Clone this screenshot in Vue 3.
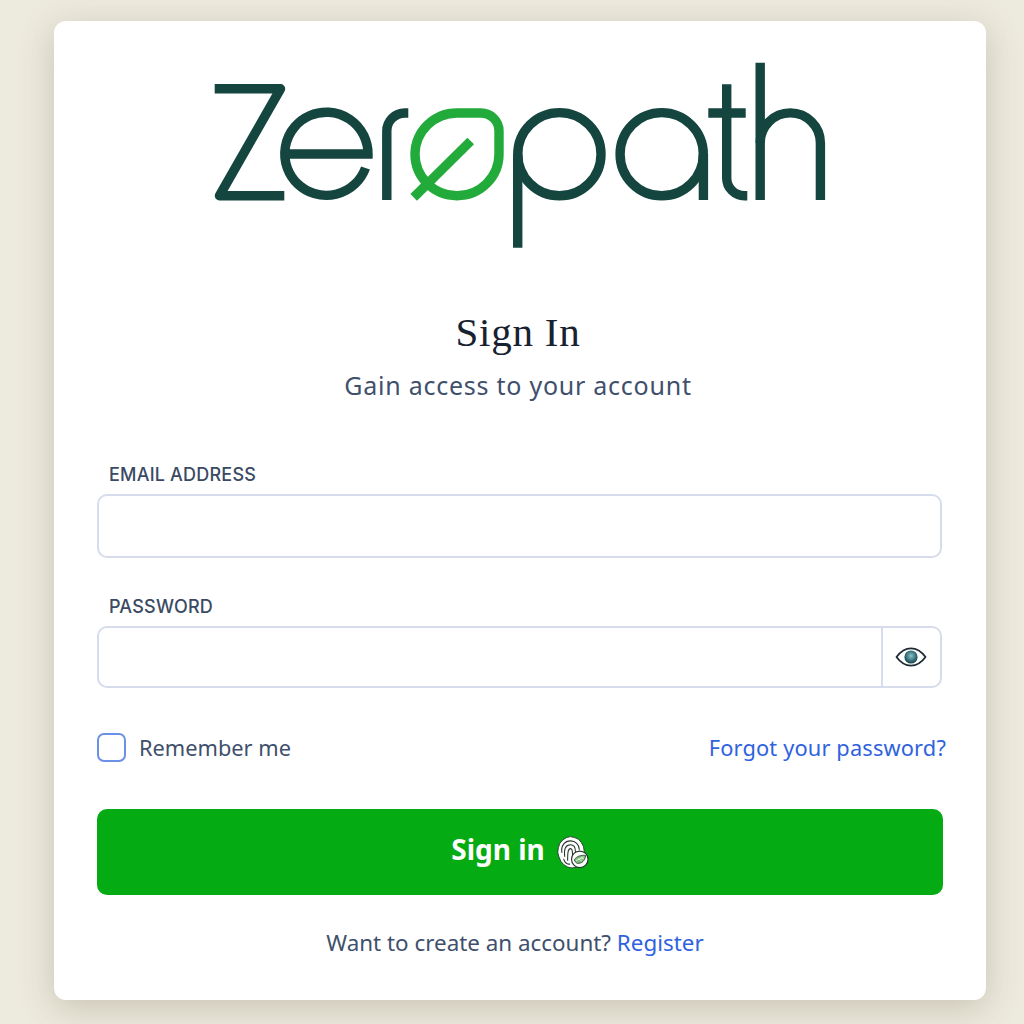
<script setup>
import { ref } from 'vue'

const email = ref('')
const password = ref('')
const remember = ref(false)
</script>

<template>
  <main class="page">
    <section class="card">
      <svg class="logo" viewBox="205 55 630 200" width="630" height="200" role="img" aria-label="Zeropath">
        <g class="ink">
          <path stroke-linejoin="round" d="M214.7 88.8H280.5L219.5 195.7H284.3" />
          <path d="M284.8 154H368A41.6 41.6 0 1 0 365.5 168" />
          <path d="M386.8 200V131A18 18 0 0 1 404.8 113H408.3" />
          <circle cx="559.4" cy="154.2" r="41.6" />
          <path d="M517.7 154V247.7" />
          <circle cx="661.7" cy="154.2" r="41.6" />
          <path d="M703.4 154V200" />
          <path d="M726.7 84.3V178A17.7 17.7 0 0 0 744.4 195.7H747.3" />
          <path d="M708.3 113H745.7" />
          <path d="M760.2 62.7V200" />
          <path d="M820.4 200V143A30.1 30.1 0 0 0 760.2 143" />
        </g>
        <g class="leaf">
          <path d="M457 113H481A18 18 0 0 1 499 131V154A42 41.7 0 0 1 457 195.7A42 41.7 0 0 1 415 154A42 41.7 0 0 1 457 113Z" />
          <path d="M413.7 197.3L470.7 141" />
        </g>
      </svg>

      <h1 class="title">Sign In</h1>
      <p class="subtitle">Gain access to your account</p>

      <form class="form" @submit.prevent>
        <label class="label" for="email">EMAIL ADDRESS</label>
        <input id="email" v-model="email" class="input email" type="email" />

        <label class="label password-label" for="password">PASSWORD</label>
        <div class="password-group">
          <input id="password" v-model="password" class="input password" type="password" />
          <button class="eye" type="button" aria-label="Show password">
            <svg viewBox="0 0 32 20" width="32" height="20">
              <defs>
                <radialGradient id="pupil" cx="50%" cy="42%" r="58%">
                  <stop offset="0%" stop-color="#8fc0c6" />
                  <stop offset="55%" stop-color="#3f7c88" />
                  <stop offset="100%" stop-color="#173f49" />
                </radialGradient>
              </defs>
              <path d="M1.5 10C6 3.8 10.6 1.3 16 1.3S26 3.8 30.5 10C26 16.2 21.4 18.7 16 18.7S6 16.2 1.5 10Z" fill="none" stroke="#1d2b33" stroke-width="1.8" stroke-linejoin="round" />
              <circle cx="16" cy="10" r="6.6" fill="url(#pupil)" />
            </svg>
          </button>
        </div>

        <div class="options">
          <label class="remember">
            <input v-model="remember" class="check" type="checkbox" />
            <span>Remember me</span>
          </label>
          <a class="link forgot" href="#">Forgot your password?</a>
        </div>

        <button class="submit" type="submit">
          <span class="submit-text">Sign in</span>
          <svg viewBox="0 0 34 36" width="33" height="35" aria-hidden="true">
            <path d="M11 2.5L15 1.6L19 2.6L23 4.2L26 7.6L28.2 11.5L29 16L28.7 21L27.5 26L25 30L21 33L16.5 34L12 33L8 30.5L5 27L3 22.5L1.8 18L2.4 13L4 8.5L7 5Z" fill="#fff" stroke="#26352b" stroke-width="0.9" stroke-linejoin="round" />
            <g fill="none" stroke="#26352b" stroke-width="1.1" stroke-linecap="round">
              <path d="M6 18C5 11 9 6 15 6C20 6 24 10 24 15" />
              <path d="M9 22C8 14 10 10 15 10C19 10 20 13 20 17" />
              <path d="M12 26C12 20 12 14 15 14C17 14 17 17 17 20" />
              <path d="M8 25C9 28 11 30 14 30" />
            </g>
            <circle cx="24.5" cy="25" r="8.5" fill="#fff" stroke="#26352b" stroke-width="1.2" />
            <path d="M18.8 25.5C21.5 21.5 26 20.5 30.6 21C30 26 26.8 29.6 22 29.2C20.6 28.8 19.4 27.4 18.8 25.5Z" fill="#7dbd7b" stroke="#26352b" stroke-width=".8" />
            <path d="M20.5 26.5L28.5 22.5M23 24.5L26.5 26.5M25.5 23.4L28.8 24.6" fill="none" stroke="#f2f8ee" stroke-width=".8" />
          </svg>
        </button>

        <p class="register">Want to create an account? <a class="link" href="#">Register</a></p>
      </form>
    </section>
  </main>
</template>

<style>
html, body {
  margin: 0;
  background: #edeade;
}
</style>

<style scoped>
.page {
  box-sizing: border-box;
  height: 1024px;
  overflow: hidden;
  padding: 21px 38px 24px 54px;
  font-family: "Noto Sans", "Open Sans", sans-serif;
  color: #40506c;
}
.card {
  box-sizing: border-box;
  height: 979px;
  padding: 34px 43px 0;
  background: #fff;
  border-radius: 12px;
  box-shadow: 0 8px 34px rgba(104, 98, 70, 0.28);
  display: flex;
  flex-direction: column;
}
.logo {
  display: block;
  flex: none;
  align-self: center;
}
.ink, .leaf {
  fill: none;
  stroke-width: 9.4;
}
.ink { stroke: #14453f; }
.leaf { stroke: #22ab3a; }
.title {
  margin: 52px 0 0;
  font: 400 41px/50px "Liberation Serif", serif;
  letter-spacing: 0.75px;
  color: #172130;
  text-align: center;
  transform: translateX(-2px);
}
.subtitle {
  margin: 12px 0 0;
  font-size: 25px;
  line-height: 32px;
  letter-spacing: 0.75px;
  text-align: center;
  transform: translateX(-2px);
}
.form {
  display: flex;
  flex-direction: column;
  margin-top: 61px;
}
.label {
  padding-left: 12px;
  font-family: Inter, "Noto Sans", sans-serif;
  font-size: 18px;
  letter-spacing: 0.2px;
  line-height: 26px;
  font-weight: 500;
  color: #3a4a63;
}
.input {
  box-sizing: border-box;
  display: block;
  width: 100%;
  border: 2px solid #d6dcec;
  border-radius: 10px;
  background: #fff;
  outline: none;
}
.email {
  width: 845px;
  height: 64px;
  margin-top: 6px;
}
.password-label {
  margin-top: 36px;
}
.password-group {
  display: flex;
  width: 845px;
  height: 62px;
  margin-top: 6px;
}
.password {
  flex: 1;
  height: 100%;
  border-radius: 10px 0 0 10px;
}
.eye {
  flex: none;
  box-sizing: border-box;
  width: 59px;
  height: 100%;
  padding: 0 2px 0 0;
  border: 2px solid #d6dcec;
  border-left: 0;
  border-radius: 0 10px 10px 0;
  background: #fff;
  display: flex;
  align-items: center;
  justify-content: center;
}
.options {
  display: flex;
  align-items: center;
  justify-content: space-between;
  margin: 45px -3px 0 0;
  height: 29px;
  font-size: 21.8px;
}
.remember {
  display: flex;
  align-items: center;
  gap: 13px;
}
.check {
  appearance: none;
  box-sizing: border-box;
  width: 29px;
  height: 29px;
  margin: 0;
  border: 2px solid #6b90e6;
  border-radius: 7px;
  background: #fff;
}
.link {
  color: #2f62e0;
  text-decoration: none;
}
.forgot {
  letter-spacing: 0.15px;
}
.submit {
  display: flex;
  align-items: center;
  justify-content: center;
  gap: 11px;
  height: 86px;
  margin-top: 47px;
  padding: 0;
  border: 0;
  border-radius: 10px;
  background: #04ab12;
  color: #fff;
  font: 700 28px/1 "Noto Sans", sans-serif;
}
.submit-text {
  margin-bottom: 6px;
}
.register {
  margin: 33px 0 0;
  font-size: 22.4px;
  line-height: 30px;
  text-align: center;
  transform: translateX(-5px);
}
</style>
